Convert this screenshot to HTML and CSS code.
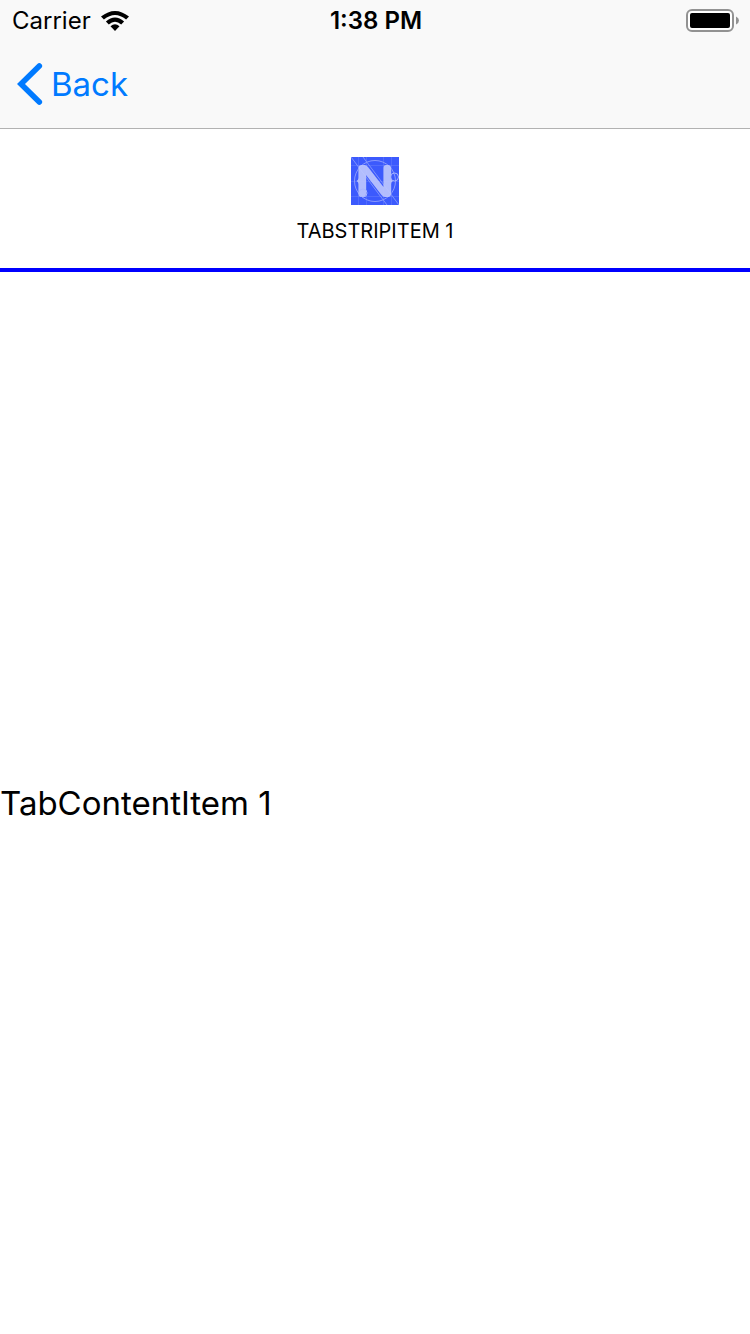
FILE: index.html
```html
<!DOCTYPE html>
<html lang="en">
<head>
<meta charset="utf-8">
<meta name="viewport" content="width=device-width, initial-scale=1">
<title>Tabs</title>
<link rel="stylesheet" href="styles.css">
</head>
<body>
<header class="header">
  <div class="status">
    <div class="carrier">
      <span>Carrier</span>
      <svg class="wifi" viewBox="0 0 28 20" aria-hidden="true">
        <path d="M0 5.600Q14-5.600 28 5.600L25.100 8.500Q14-.600 2.900 8.500Z"/>
        <path d="M4.900 10.500Q14 2.700 23.100 10.500L20.200 13.400Q14 8.200 7.800 13.400Z"/>
        <path d="M9.500 15.200Q14 11.400 18.500 15.200L14 20Z"/>
      </svg>
    </div>
    <time class="clock">1:38 PM</time>
    <svg class="battery" viewBox="0 0 54 24" aria-hidden="true">
      <rect x="1" y="1" width="46" height="21" rx="5" fill="#fff" stroke="#929292" stroke-width="2"/>
      <rect x="4" y="4" width="40" height="15" rx="2"/>
      <path d="M50 7.500Q53 9 53 11.500T50 15.500Z" fill="#929292"/>
    </svg>
  </div>
  <nav class="nav">
    <button class="back" type="button">
      <svg class="chevron" viewBox="0 0 26 42" aria-hidden="true">
        <path d="M22.300 3L4 21L22.300 39" fill="none" stroke="currentColor" stroke-width="5.600" stroke-linecap="round" stroke-linejoin="miter"/>
      </svg>
      <span>Back</span>
    </button>
  </nav>
</header>
<main class="tabs">
  <div class="strip" role="tablist">
    <button class="tab" id="tab-1" type="button" role="tab" aria-selected="true" aria-controls="panel-1">
      <svg class="logo" viewBox="0 0 48 48" aria-hidden="true">
        <rect width="48" height="48" fill="#3c5afd"/>
        <g fill="none" stroke="#7f93fd">
          <path d="M0 8.500H48M0 24.500H48M0 39.500H48M7.500 0V48M15.500 0V48M32.500 0V48M40.500 0V48" stroke-width=".6" opacity=".55"/>
          <path d="M0 0L36 48M12 0L48 48" stroke-width="1"/>
          <circle cx="24" cy="24" r="20.500" stroke="#8999fd"/>
        </g>
        <path d="M7.500 11Q7.500 8 10.500 8H13.500Q15.500 8 17 10L32.500 30V11Q32.500 8 35 8H37Q40 8 40 11V21Q40 23 42 24Q40 25 40 27V37Q40 40 37 40H34Q32 40 30.500 38L15 18V37Q15 40 12.500 40H10.500Q7.500 40 7.500 37V27Q7.500 25 5.500 24Q7.500 23 7.500 21Z" fill="#bfc8fd" opacity=".9"/>
        <g fill="none" stroke="#aab6fd">
          <circle cx="12" cy="36" r="4"/>
          <circle cx="43.500" cy="20" r="4"/>
        </g>
      </svg>
      <span>TABSTRIPITEM 1</span>
    </button>
  </div>
  <section class="panel" id="panel-1" role="tabpanel" aria-labelledby="tab-1">
    <p class="label">TabContentItem 1</p>
  </section>
</main>
</body>
</html>
```
FILE: styles.css
```css
* {
  box-sizing: border-box;
}

body {
  display: flex;
  flex-direction: column;
  min-height: 100vh;
  margin: 0;
  background: #fff;
  color: #000;
  font-family: Inter, "Liberation Sans", sans-serif;
}

button {
  padding: 0;
  border: 0;
  background: none;
  font: inherit;
  color: inherit;
}

svg {
  display: block;
}

.header {
  background: #f9f9f9;
  border-bottom: 1px solid #b2b2b2;
}

.status {
  display: grid;
  grid-template-columns: 1fr auto 1fr;
  align-items: center;
  height: 42px;
  padding: 0 10px 0 12px;
  font-size: 24px;
  line-height: 40px;
}

.carrier {
  display: flex;
  align-items: center;
  gap: 10px;
}

.wifi {
  width: 28px;
  height: 20px;
}

.clock {
  font-weight: 600;
}

.battery {
  justify-self: end;
  width: 54px;
  height: 24px;
}

.nav {
  display: flex;
  align-items: center;
  height: 86px;
  padding: 0 17px 2px;
}

.back {
  display: flex;
  align-items: center;
  gap: 8px;
  color: #007aff;
  font-size: 33px;
  line-height: 44px;
}

.chevron {
  width: 26px;
  height: 42px;
}

.tabs {
  display: flex;
  flex: 1;
  flex-direction: column;
}

.strip {
  display: flex;
}

.tab {
  display: flex;
  flex: 1;
  flex-direction: column;
  align-items: center;
  gap: 14px;
  padding: 28px 0 25px;
  border-bottom: 4px solid #00f;
  font-size: 20px;
  line-height: 24px;
}

.logo {
  width: 48px;
  height: 48px;
}

.panel {
  display: flex;
  flex: 1;
  align-items: center;
}

.label {
  margin: 0;
  font-size: 33px;
  line-height: 40px;
}
```
